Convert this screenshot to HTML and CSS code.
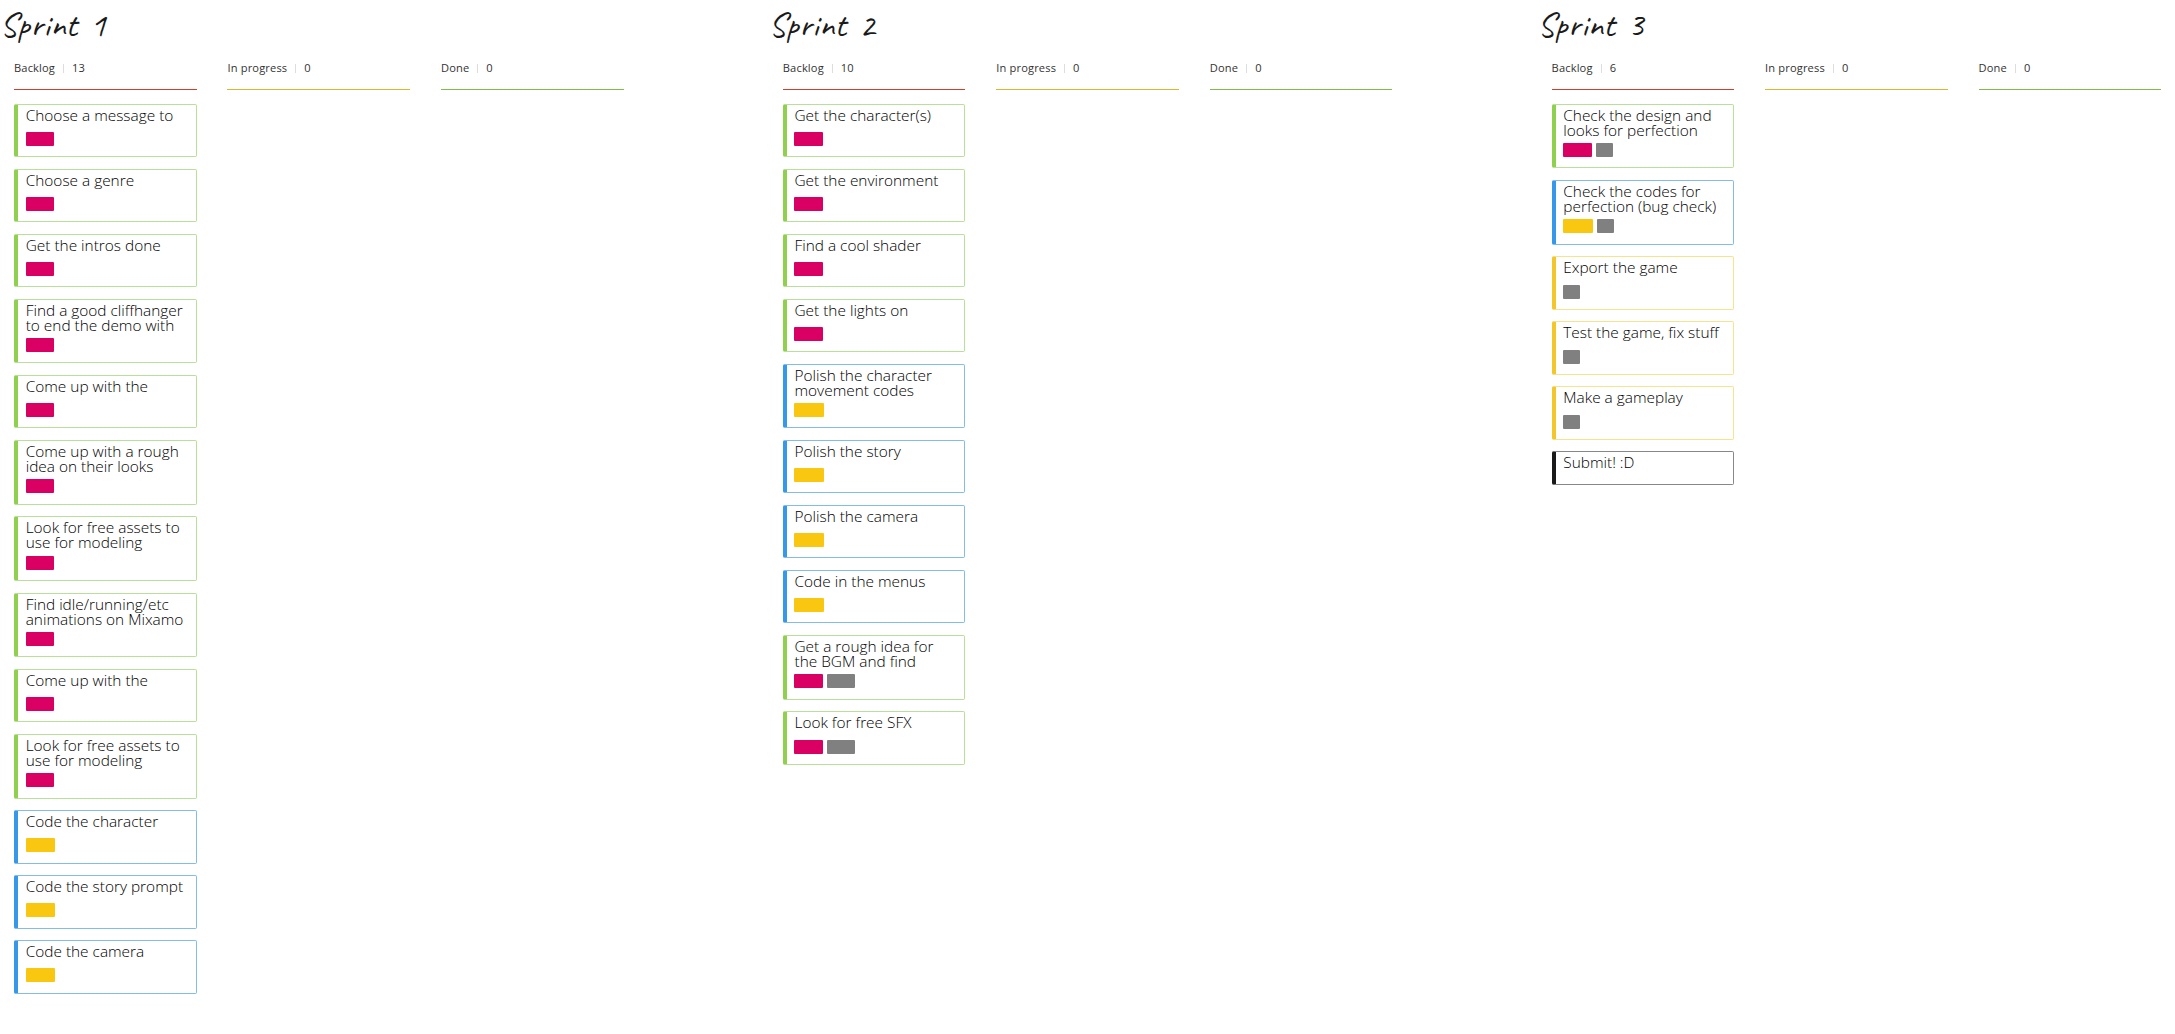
FILE: index.html
```
<!DOCTYPE html>
<html lang="en">
<head>
<meta charset="utf-8">
<title>Sprint board</title>
<link rel="stylesheet" href="styles.css">
</head>
<body>
<main class="board">
  <section class="sprint">
    <h1 class="sprint-title"><span class="word">Sprint</span><span>1</span></h1>
    <div class="columns">
      <div class="column">
        <header class="column-head red"><span>Backlog</span><i class="divider"></i><span>13</span></header>
        <article class="card green"><p>Choose a message to</p><div class="tags"><span class="tag pink"></span></div></article>
        <article class="card green"><p>Choose a genre</p><div class="tags"><span class="tag pink"></span></div></article>
        <article class="card green"><p>Get the intros done</p><div class="tags"><span class="tag pink"></span></div></article>
        <article class="card green two-line"><p>Find a good cliffhanger<br>to end the demo with</p><div class="tags"><span class="tag pink"></span></div></article>
        <article class="card green"><p>Come up with the</p><div class="tags"><span class="tag pink"></span></div></article>
        <article class="card green two-line"><p>Come up with a rough<br>idea on their looks</p><div class="tags"><span class="tag pink"></span></div></article>
        <article class="card green two-line"><p>Look for free assets to<br>use for modeling</p><div class="tags"><span class="tag pink"></span></div></article>
        <article class="card green two-line"><p>Find idle/running/etc<br>animations on Mixamo</p><div class="tags"><span class="tag pink"></span></div></article>
        <article class="card green"><p>Come up with the</p><div class="tags"><span class="tag pink"></span></div></article>
        <article class="card green two-line"><p>Look for free assets to<br>use for modeling</p><div class="tags"><span class="tag pink"></span></div></article>
        <article class="card blue"><p>Code the character</p><div class="tags"><span class="tag amber"></span></div></article>
        <article class="card blue"><p>Code the story prompt</p><div class="tags"><span class="tag amber"></span></div></article>
        <article class="card blue"><p>Code the camera</p><div class="tags"><span class="tag amber"></span></div></article>
      </div>
      <div class="column"><header class="column-head yellow"><span>In progress</span><i class="divider"></i><span>0</span></header></div>
      <div class="column"><header class="column-head lime"><span>Done</span><i class="divider"></i><span>0</span></header></div>
    </div>
  </section>

  <section class="sprint">
    <h1 class="sprint-title"><span class="word">Sprint</span><span>2</span></h1>
    <div class="columns">
      <div class="column">
        <header class="column-head red"><span>Backlog</span><i class="divider"></i><span>10</span></header>
        <article class="card green"><p>Get the character(s)</p><div class="tags"><span class="tag pink"></span></div></article>
        <article class="card green"><p>Get the environment</p><div class="tags"><span class="tag pink"></span></div></article>
        <article class="card green"><p>Find a cool shader</p><div class="tags"><span class="tag pink"></span></div></article>
        <article class="card green"><p>Get the lights on</p><div class="tags"><span class="tag pink"></span></div></article>
        <article class="card blue two-line"><p>Polish the character<br>movement codes</p><div class="tags"><span class="tag amber"></span></div></article>
        <article class="card blue"><p>Polish the story</p><div class="tags"><span class="tag amber"></span></div></article>
        <article class="card blue"><p>Polish the camera</p><div class="tags"><span class="tag amber"></span></div></article>
        <article class="card blue"><p>Code in the menus</p><div class="tags"><span class="tag amber"></span></div></article>
        <article class="card green two-line"><p>Get a rough idea for<br>the BGM and find</p><div class="tags"><span class="tag pink"></span><span class="tag gray"></span></div></article>
        <article class="card green"><p>Look for free SFX</p><div class="tags"><span class="tag pink"></span><span class="tag gray"></span></div></article>
      </div>
      <div class="column"><header class="column-head yellow"><span>In progress</span><i class="divider"></i><span>0</span></header></div>
      <div class="column"><header class="column-head lime"><span>Done</span><i class="divider"></i><span>0</span></header></div>
    </div>
  </section>

  <section class="sprint">
    <h1 class="sprint-title"><span class="word">Sprint</span><span>3</span></h1>
    <div class="columns">
      <div class="column">
        <header class="column-head red"><span>Backlog</span><i class="divider"></i><span>6</span></header>
        <article class="card green two-line"><p>Check the design and<br>looks for perfection</p><div class="tags"><span class="tag pink"></span><span class="tag gray small"></span></div></article>
        <article class="card blue two-line"><p>Check the codes for<br>perfection (bug check)</p><div class="tags"><span class="tag amber"></span><span class="tag gray small"></span></div></article>
        <article class="card gold"><p>Export the game</p><div class="tags"><span class="tag gray small"></span></div></article>
        <article class="card gold"><p>Test the game, fix stuff</p><div class="tags"><span class="tag gray small"></span></div></article>
        <article class="card gold"><p>Make a gameplay</p><div class="tags"><span class="tag gray small"></span></div></article>
        <article class="card black untagged"><p>Submit! :D</p></article>
      </div>
      <div class="column"><header class="column-head yellow"><span>In progress</span><i class="divider"></i><span>0</span></header></div>
      <div class="column"><header class="column-head lime"><span>Done</span><i class="divider"></i><span>0</span></header></div>
    </div>
  </section>
</main>
</body>
</html>
```
FILE: styles.css
```
* { box-sizing: border-box; }

body {
  margin: 0;
  background: #fff;
  color: #1a1a1a;
  font-family: "Open Sans", "Noto Sans", sans-serif;
}

.board {
  display: grid;
  grid-template-columns: repeat(3, 768.8px);
  height: 1034px;
  overflow: hidden;
}

.sprint-title {
  display: flex;
  gap: 13px;
  height: 50px;
  margin: 0;
  font: 400 34px/49px Caveat, Lato, sans-serif;
}

.word { letter-spacing: 0.5px; }

.columns {
  display: grid;
  grid-template-columns: repeat(3, 182.7px);
  column-gap: 30.8px;
  padding-left: 14px;
}

.column {
  display: flex;
  flex-direction: column;
  gap: 11.5px;
}

.column-head {
  display: flex;
  align-items: flex-start;
  height: 40px;
  margin-bottom: 2.2px;
  padding-top: 10px;
  border-bottom: 1px solid;
  color: #333;
  font-size: 11.1px;
  line-height: 16px;
  letter-spacing: 0.15px;
}

.divider {
  width: 1px;
  height: 9px;
  margin: 4px 8px 0;
  background: #ddd;
}

.red { border-color: #cf3f2c; }
.yellow { border-color: #deb62c; }
.lime { border-color: #7fbd48; }

.card {
  --accent: #8fd14f;
  --edge: #b9e098;
  height: 53.5px;
  padding: 3px 0 0 7.7px;
  border: 1px solid var(--edge);
  border-left: 4px solid var(--accent);
  border-radius: 2px;
}

.card.two-line { height: 64.8px; }
.card.untagged { height: 34px; }
.blue { --accent: #3598e8; --edge: #83bbea; }
.gold { --accent: #f3c72b; --edge: #f7e28e; }
.black { --accent: #1a1a1a; --edge: #888; }

.card p {
  margin: 0;
  color: #000;
  font-size: 15.4px;
  font-weight: 300;
  line-height: 15px;
  white-space: nowrap;
}

.tags {
  display: flex;
  gap: 4.5px;
  margin-top: 9.3px;
}

.two-line .tags { margin-top: 5.5px; }

.tag {
  width: 28.5px;
  height: 14px;
  border-radius: 1px;
}

.pink { background: #da0063; }
.amber { width: 29.3px; background: #fac710; }
.gray { width: 27.4px; background: #808080; }
.gray.small { width: 16.7px; }
```
